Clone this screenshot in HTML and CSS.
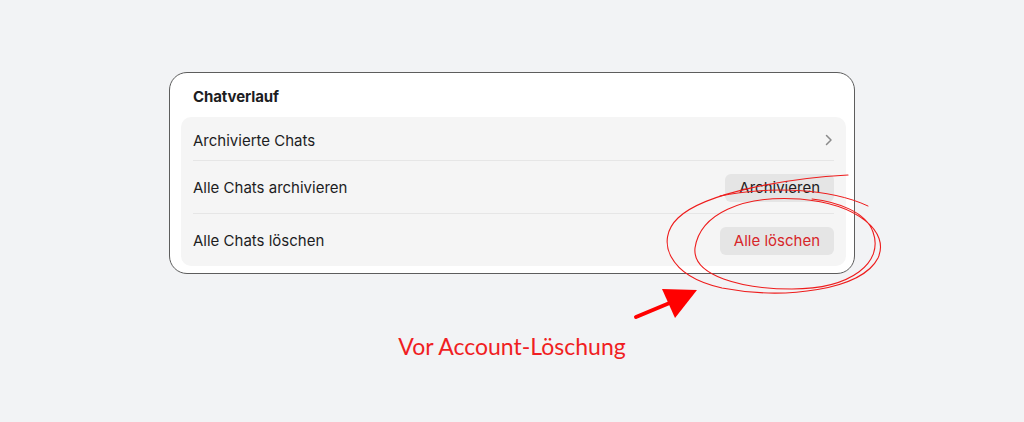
FILE: index.html
```html
<!DOCTYPE html>
<html lang="de">
<head>
<meta charset="utf-8">
<title>Chatverlauf</title>
<link rel="stylesheet" href="styles.css">
</head>
<body>
<main class="stage">
  <section class="card">
    <h2 class="card-title">Chatverlauf</h2>
    <div class="panel">
      <div class="row row-first">
        <span class="label">Archivierte Chats</span>
        <svg class="chevron" width="8" height="12" viewBox="0 0 8 12"><path d="M1.5 1.5 L6 6 L1.5 10.5" fill="none" stroke="#8a8a8a" stroke-width="1.5" stroke-linecap="round" stroke-linejoin="round"/></svg>
      </div>
      <div class="row">
        <span class="label">Alle Chats archivieren</span>
        <button class="btn">Archivieren</button>
      </div>
      <div class="row">
        <span class="label">Alle Chats löschen</span>
        <button class="btn btn-danger">Alle löschen</button>
      </div>
    </div>
  </section>
  <p class="note">Vor Account-Löschung</p>
  <svg class="scribble" width="1024" height="422" viewBox="0 0 1024 422">
    <path d="M848,175 C790,178 705,192 678,218 C655,240 668,276 722,288 C785,300 862,290 878,258 C890,232 858,204 800,199 C742,195 700,214 695,248 C692,276 742,289 792,289 C852,289 884,262 873,232 C866,212 838,202 812,199" fill="none" stroke="#ee1c1c" stroke-width="1.1" stroke-linecap="round"/>
    <path d="M720,196 C770,186 830,188 868,206" fill="none" stroke="#ee1c1c" stroke-width="1" stroke-linecap="round"/>
    <line x1="636" y1="317" x2="672" y2="302" stroke="#ff0000" stroke-width="4" stroke-linecap="round"/>
    <polygon points="662,289 697,290 675,318" fill="#ff0000"/>
  </svg>
</main>
</body>
</html>
```
FILE: styles.css
```css
html, body {
  margin: 0;
  padding: 0;
}
body {
  background: #f2f3f5;
  font-family: Inter, "Liberation Sans", Arial, sans-serif;
  color: #1d1d1f;
  width: 1024px;
  height: 422px;
  overflow: hidden;
}
.stage {
  position: relative;
  width: 1024px;
  height: 422px;
  display: flex;
  flex-direction: column;
  align-items: center;
  padding-top: 72px;
  box-sizing: border-box;
}
.card {
  width: 686px;
  height: 202px;
  box-sizing: border-box;
  background: #ffffff;
  border: 1px solid #5d5d5d;
  border-radius: 18px;
  padding: 0 8px 7px 11px;
  display: flex;
  flex-direction: column;
}
.card-title {
  margin: 0;
  height: 44px;
  padding-left: 12px;
  display: flex;
  align-items: center;
  font-size: 15px;
  font-weight: 700;
  color: #1d1d1f;
  letter-spacing: -0.1px;
  padding-top: 2px;
  box-sizing: border-box;
}
.panel {
  flex: 1;
  background: #f5f5f5;
  border-radius: 10px;
  padding: 0 12px;
  display: flex;
  flex-direction: column;
}
.row {
  height: 53px;
  box-sizing: border-box;
  padding-top: 1px;
  display: flex;
  align-items: center;
  justify-content: space-between;
  border-top: 1px solid #e6e6e6;
}
.row-first {
  height: 43px;
  padding-top: 3px;
  border-top: none;
}
.label {
  font-size: 15px;
  color: #1d1d1f;
}
.chevron {
  margin-right: 1px;
}
.btn {
  font-family: Inter, "Liberation Sans", Arial, sans-serif;
  font-size: 15px;
  font-weight: 400;
  height: 28px;
  padding: 0 14px;
  border: none;
  border-radius: 6px;
  background: #e5e5e5;
  color: #1d1d1f;
}
.btn-danger {
  color: #d7262a;
}
.note {
  margin: 58px 0 0 0;
  font-family: Lato, "Liberation Sans", sans-serif;
  font-size: 23px;
  font-weight: 400;
  color: #f01e23;
}
.scribble {
  position: absolute;
  left: 0;
  top: 0;
  pointer-events: none;
}
```
